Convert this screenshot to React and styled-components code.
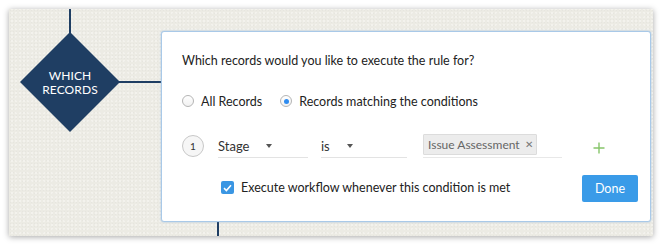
import React from "react";
import styled, { createGlobalStyle } from "styled-components";

const Global = createGlobalStyle`
  html, body { margin: 0; padding: 0; background: #fff; }
  body { font-family: Lato, "Open Sans", sans-serif; color: #333; }
  * { box-sizing: border-box; }
`;

const Frame = styled.div`
  padding: 9px 10px 10px 9px;
`;

const Canvas = styled.div`
  position: relative;
  width: 644px;
  height: 227px;
  background-color: #ecebe4;
  background-image:
    radial-gradient(rgba(0,0,0,0.025) 1px, transparent 1px),
    radial-gradient(rgba(255,255,255,0.35) 1px, transparent 1px);
  background-size: 3px 3px, 4px 4px;
  background-position: 0 0, 1px 2px;
  box-shadow: 0 1px 6px rgba(0,0,0,0.35);
  padding: 22px 0 0 152px;
`;

const VLine = styled.div`
  position: absolute;
  left: ${p => p.$x}px;
  top: ${p => p.$y}px;
  width: 2px;
  height: ${p => p.$h}px;
  background: #1f3e63;
`;

const HLine = styled.div`
  position: absolute;
  left: ${p => p.$x}px;
  top: ${p => p.$y}px;
  height: 2px;
  width: ${p => p.$w}px;
  background: #1f3e63;
`;

const Diamond = styled.div`
  position: absolute;
  left: 11px;
  top: 23px;
  width: 100px;
  height: 100px;
  background: #1f3e63;
  clip-path: polygon(50% 0, 100% 50%, 50% 100%, 0 50%);
  display: flex;
  flex-direction: column;
  align-items: center;
  justify-content: center;
  text-align: center;
  color: #fff;
  font-size: 12px;
  letter-spacing: 0.1px;
  padding-top: 1px;
`;

const DiamondLine = styled.span`
  display: block;
  line-height: 14px;
  height: 14px;
`;

const Dialog = styled.div`
  position: relative;
  width: 490px;
  height: 191px;
  background: #fff;
  border: 1px solid #a9c9e8;
  border-radius: 3px;
  box-shadow: 0 0 2px rgba(120,170,220,0.7);
  padding: 21px 12px 0 20px;
  display: flex;
  flex-direction: column;
`;

const Title = styled.div`
  font-size: 12.5px;
  line-height: 16px;
  color: #222;
`;

const RadioRow = styled.div`
  display: flex;
  align-items: center;
  margin-top: 24px;
  height: 16px;
`;

const RadioLabel = styled.label`
  display: flex;
  align-items: center;
  font-size: 12.5px;
  color: #222;
  margin-right: ${p => p.$mr || 0}px;
`;

const RadioCircle = styled.span`
  width: 12px;
  height: 12px;
  border-radius: 50%;
  border: 1px solid #b5b5b5;
  background: linear-gradient(#fff, #f1f1f1);
  margin-right: 7px;
  display: flex;
  align-items: center;
  justify-content: center;
  &::after {
    content: "";
    width: 5px;
    height: 5px;
    border-radius: 50%;
    background: ${p => (p.$checked ? "#2f8cf0" : "transparent")};
  }
`;

const CondRow = styled.div`
  display: flex;
  align-items: center;
  margin-top: 25px;
  height: 24px;
`;

const Num = styled.div`
  width: 22px;
  height: 22px;
  border-radius: 50%;
  border: 1px solid #c8c8c8;
  background: #f6f6f6;
  font-size: 10px;
  color: #333;
  display: flex;
  align-items: center;
  justify-content: center;
  margin-right: 14px;
  flex-shrink: 0;
`;

const Select = styled.div`
  width: ${p => p.$w}px;
  height: 22px;
  margin-right: ${p => p.$mr}px;
  border-bottom: 1px solid #e3e3e3;
  display: flex;
  align-items: center;
  font-size: 13px;
  color: #333;
  margin-top: 1px;
`;

const Arrow = styled.span`
  width: 0;
  height: 0;
  border-left: 3.5px solid transparent;
  border-right: 3.5px solid transparent;
  border-top: 4px solid #555;
  margin-left: ${p => p.$ml}px;
`;

const MultiField = styled.div`
  width: 139px;
  height: 22px;
  border-bottom: 1px solid #e8e8e8;
  display: flex;
  align-items: flex-start;
  margin-top: 1px;
`;

const Tag = styled.div`
  height: 21px;
  width: 114px;
  background: #ececec;
  border: 1px solid #dcdcdc;
  border-radius: 1px;
  display: flex;
  align-items: center;
  padding-left: 4px;
  font-size: 12px;
  color: #666;
  margin-top: -2px;
  position: relative;
  z-index: 1;
  box-shadow: 3px 0 0 #fff;
`;

const TagX = styled.span`
  font-size: 10px;
  color: #777;
  margin-left: 5px;
`;

const Plus = styled.span`
  margin-left: 31px;
  display: flex;
  margin-top: 3px;
`;

const BottomRow = styled.div`
  display: flex;
  align-items: center;
  margin-top: 17px;
  height: 27px;
  padding-left: 39px;
`;

const Check = styled.span`
  width: 13px;
  height: 13px;
  border-radius: 2px;
  background: #3a96e3;
  display: flex;
  align-items: center;
  justify-content: center;
  margin-right: 7px;
  margin-top: -2px;
`;

const CheckText = styled.span`
  font-size: 12.5px;
  color: #222;
  margin-top: -2px;
`;

const Done = styled.button`
  margin-left: auto;
  width: 56px;
  height: 27px;
  border: none;
  border-radius: 2px;
  background: #3a9be8;
  color: #fff;
  font-family: inherit;
  font-size: 12.5px;
  padding: 0;
`;

export default function App() {
  return (
    <>
      <Global />
      <Frame>
        <Canvas>
          <VLine $x={60} $y={0} $h={26} />
          <Diamond>
            <DiamondLine>WHICH</DiamondLine>
            <DiamondLine>RECORDS</DiamondLine>
          </Diamond>
          <HLine $x={110} $y={72} $w={44} />
          <VLine $x={208} $y={205} $h={22} />
          <Dialog>
            <Title>Which records would you like to execute the rule for?</Title>
            <RadioRow>
              <RadioLabel $mr={18}>
                <RadioCircle />
                All Records
              </RadioLabel>
              <RadioLabel>
                <RadioCircle $checked />
                Records matching the conditions
              </RadioLabel>
            </RadioRow>
            <CondRow>
              <Num>1</Num>
              <Select $w={90} $mr={13}>
                Stage
                <Arrow $ml={17} />
              </Select>
              <Select $w={86} $mr={16}>
                is
                <Arrow $ml={17} />
              </Select>
              <MultiField>
                <Tag>
                  Issue Assessment
                  <TagX>✕</TagX>
                </Tag>
              </MultiField>
              <Plus>
                <svg width="12" height="12" viewBox="0 0 12 12">
                  <path d="M6 0.5 V11.5 M0.5 6 H11.5" stroke="#86c56a" strokeWidth="1.4" fill="none" />
                </svg>
              </Plus>
            </CondRow>
            <BottomRow>
              <Check>
                <svg width="9" height="8" viewBox="0 0 9 8">
                  <path d="M1 4.2 L3.4 6.5 L8 1.3" fill="none" stroke="#fff" strokeWidth="1.6" />
                </svg>
              </Check>
              <CheckText>Execute workflow whenever this condition is met</CheckText>
              <Done>Done</Done>
            </BottomRow>
          </Dialog>
        </Canvas>
      </Frame>
    </>
  );
}
